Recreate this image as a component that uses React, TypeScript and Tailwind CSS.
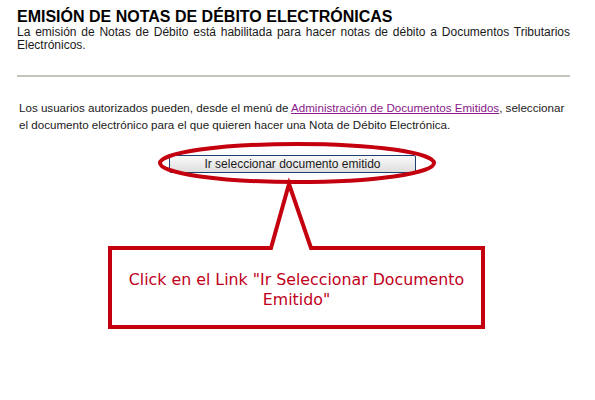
export default function App() {
  return (
    <div className="relative w-[595px] h-[400px] overflow-hidden bg-white text-black font-['Liberation_Sans',Arial,sans-serif]">
      <div className="pl-[17px] pr-[25px] pt-[7px]">
        <h1 className="text-[16px] font-bold leading-[19px]">EMISIÓN DE NOTAS DE DÉBITO ELECTRÓNICAS</h1>
        <p className="text-[12px] leading-[13px] text-justify text-[#1a1a1a]">
          La emisión de Notas de Débito está habilitada para hacer notas de débito a Documentos Tributarios Electrónicos.
        </p>
        <div className="mt-[23px] h-[2px] bg-[#c6c4b6]" />
        <p className="mt-[22px] pl-[2px] whitespace-nowrap text-[11.6px] leading-[17px] text-[#1a1a1a]">
          Los usuarios autorizados pueden, desde el menú de{' '}
          <a href="#" className="text-[#8b1a8b] underline">Administración de Documentos Emitidos</a>, seleccionar
          <br />
          el documento electrónico para el que quieren hacer una Nota de Débito Electrónica.
        </p>
        <button
          type="button"
          className="mt-[22px] ml-[152px] flex h-[18px] w-[247px] items-center justify-center rounded-[2px] border border-[#1d3f70] bg-gradient-to-b from-[#fafafa] to-[#dedede] text-[12px] leading-none text-[#1a1a1a]"
        >
          Ir seleccionar documento emitido
        </button>
      </div>

      <svg className="pointer-events-none absolute inset-0" width="595" height="400" viewBox="0 0 595 400">
        <ellipse cx="297" cy="163" rx="137" ry="19" fill="none" stroke="#c4000f" strokeWidth="4" />
        <path
          d="M110 248 L271 248 L289 184 L311 248 L483 248 L483 327 L110 327 Z"
          fill="white"
          stroke="#c4000f"
          strokeWidth="4"
          strokeLinejoin="miter"
        />
      </svg>

      <div className="absolute left-[110px] top-[270px] w-[373px] text-center text-[15.8px] leading-[20px] text-[#c0001a] font-['DejaVu_Sans',Verdana,sans-serif]">
        Click en el Link "Ir Seleccionar Documento
        <br />
        Emitido"
      </div>
    </div>
  );
}
